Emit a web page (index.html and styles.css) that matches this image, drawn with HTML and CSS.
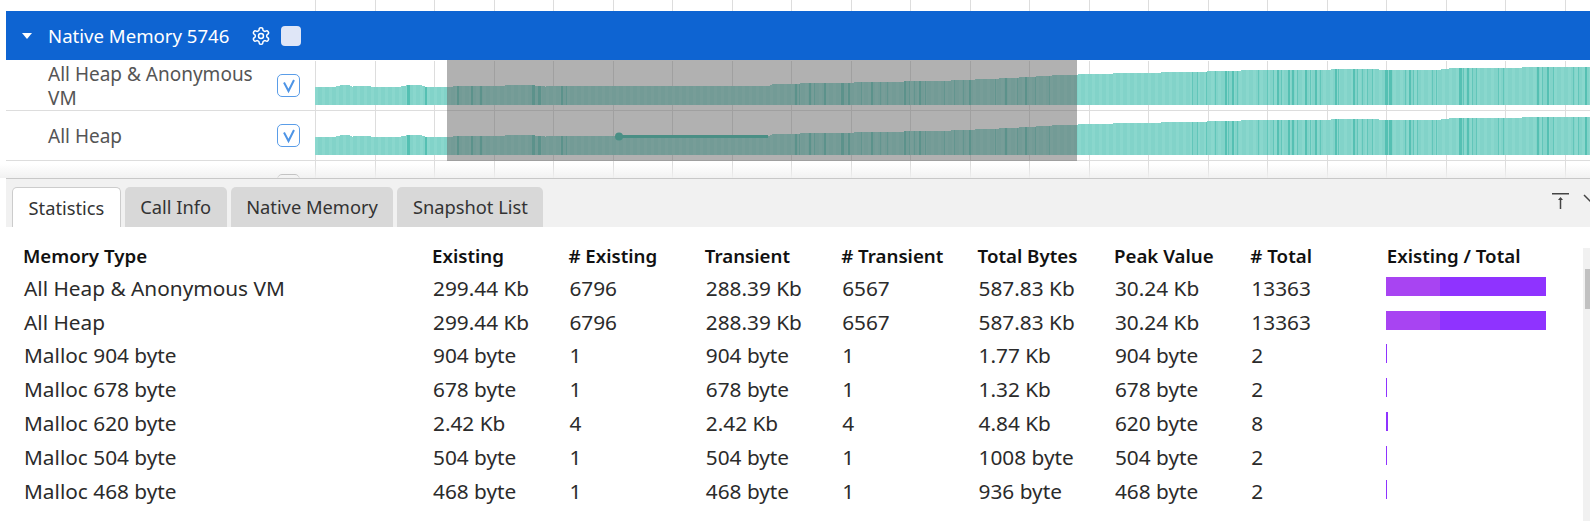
FILE: index.html
```html
<!DOCTYPE html>
<html lang="en">
<head>
  <meta charset="UTF-8">
  <title>Native Memory</title>
  <link rel="stylesheet" href="styles.css">
</head>
<body>
  <div class="trace">
    <div class="top-gap"><div class="grid-lines"></div></div>
    <div class="group-head">
      <svg class="caret" viewBox="0 0 10 6"><path d="M0 0h10L5 6z"/></svg>
      <span class="group-title">Native Memory 5746</span>
      <svg class="gear" viewBox="0 0 24 24" fill="none" stroke="#fff" stroke-width="1.8" stroke-linejoin="round"><path d="M12.22 2h-.44a2 2 0 0 0-2 2v.18a2 2 0 0 1-1 1.73l-.43.25a2 2 0 0 1-2 0l-.15-.08a2 2 0 0 0-2.73.73l-.22.38a2 2 0 0 0 .73 2.73l.15.1a2 2 0 0 1 1 1.72v.51a2 2 0 0 1-1 1.74l-.15.09a2 2 0 0 0-.73 2.73l.22.38a2 2 0 0 0 2.73.73l.15-.08a2 2 0 0 1 2 0l.43.25a2 2 0 0 1 1 1.73V20a2 2 0 0 0 2 2h.44a2 2 0 0 0 2-2v-.18a2 2 0 0 1 1-1.73l.43-.25a2 2 0 0 1 2 0l.15.08a2 2 0 0 0 2.73-.73l.22-.39a2 2 0 0 0-.73-2.73l-.15-.08a2 2 0 0 1-1-1.74v-.5a2 2 0 0 1 1-1.74l.15-.09a2 2 0 0 0 .73-2.73l-.22-.38a2 2 0 0 0-2.73-.73l-.15.08a2 2 0 0 1-2 0l-.43-.25a2 2 0 0 1-1-1.73V4a2 2 0 0 0-2-2z"/><circle cx="12" cy="12" r="3"/></svg>
      <span class="head-box"></span>
    </div>
    <div class="track">
      <div class="track-label">
        <span class="track-name">All Heap &amp; Anonymous VM</span>
        <span class="check"><svg viewBox="0 0 16 16" fill="none" stroke="#4d94e6" stroke-width="2"><path d="M3 4.5L7.5 13 13 2"/></svg></span>
      </div>
      <div class="track-chart grid-lines"><canvas id="chart-anon" width="1275" height="49"></canvas></div>
    </div>
    <div class="track">
      <div class="track-label">
        <span class="track-name">All Heap</span>
        <span class="check"><svg viewBox="0 0 16 16" fill="none" stroke="#4d94e6" stroke-width="2"><path d="M3 4.5L7.5 13 13 2"/></svg></span>
      </div>
      <div class="track-chart grid-lines"><canvas id="chart-heap" width="1275" height="49"></canvas></div>
    </div>
    <div class="track">
      <div class="track-label">
        <span class="track-name"></span>
        <span class="check check-off"></span>
      </div>
      <div class="track-chart grid-lines"></div>
    </div>
    <div class="selection"></div>
    <div class="fade"></div>
  </div>

  <div class="panel">
    <div class="tab-bar">
      <div class="tab tab-active">Statistics</div>
      <div class="tab">Call Info</div>
      <div class="tab">Native Memory</div>
      <div class="tab">Snapshot List</div>
      <svg class="pin" viewBox="0 0 17 17" fill="none" stroke="#444"><path d="M0 .75h17" stroke-width="1.5"/><path d="M8.5 16V5" stroke-width="1.5"/><path d="M6 7l2.5-3L11 7z" fill="#444" stroke="none"/></svg>
      <svg class="fold" viewBox="0 0 20 11" fill="none" stroke="#444" stroke-width="1.5"><path d="M1 1l9 9 9-9"/></svg>
    </div>
    <div class="table-wrap">
      <table class="stats">
        <thead>
          <tr><th>Memory Type</th><th>Existing</th><th># Existing</th><th>Transient</th><th># Transient</th><th>Total Bytes</th><th>Peak Value</th><th># Total</th><th>Existing / Total</th></tr>
        </thead>
        <tbody>
          <tr><td>All Heap &amp; Anonymous VM</td><td>299.44 Kb</td><td>6796</td><td>288.39 Kb</td><td>6567</td><td>587.83 Kb</td><td>30.24 Kb</td><td>13363</td><td><div class="ratio ratio-full"><span class="ratio-part"></span></div></td></tr>
          <tr><td>All Heap</td><td>299.44 Kb</td><td>6796</td><td>288.39 Kb</td><td>6567</td><td>587.83 Kb</td><td>30.24 Kb</td><td>13363</td><td><div class="ratio ratio-full"><span class="ratio-part"></span></div></td></tr>
          <tr><td>Malloc 904 byte</td><td>904 byte</td><td>1</td><td>904 byte</td><td>1</td><td>1.77 Kb</td><td>904 byte</td><td>2</td><td><div class="ratio ratio-thin"></div></td></tr>
          <tr><td>Malloc 678 byte</td><td>678 byte</td><td>1</td><td>678 byte</td><td>1</td><td>1.32 Kb</td><td>678 byte</td><td>2</td><td><div class="ratio ratio-thin"></div></td></tr>
          <tr><td>Malloc 620 byte</td><td>2.42 Kb</td><td>4</td><td>2.42 Kb</td><td>4</td><td>4.84 Kb</td><td>620 byte</td><td>8</td><td><div class="ratio ratio-wide"></div></td></tr>
          <tr><td>Malloc 504 byte</td><td>504 byte</td><td>1</td><td>504 byte</td><td>1</td><td>1008 byte</td><td>504 byte</td><td>2</td><td><div class="ratio ratio-thin"></div></td></tr>
          <tr><td>Malloc 468 byte</td><td>468 byte</td><td>1</td><td>468 byte</td><td>1</td><td>936 byte</td><td>468 byte</td><td>2</td><td><div class="ratio ratio-thin"></div></td></tr>
        </tbody>
      </table>
      <div class="scrollbar"><div class="scroll-thumb"></div></div>
    </div>
  </div>
  <script src="app.js"></script>
</body>
</html>
```

FILE: styles.css
```css
body {
  margin: 0;
  height: 528px;
  overflow: hidden;
  background: #fff;
  font-family: "Noto Sans", Arial, sans-serif;
  font-size: 18.3px;
  color: #333;
}
.grid-lines {
  background-image: repeating-linear-gradient(to right, #ddd 0, #ddd 1px, transparent 1px, transparent 59.52px);
}
.trace {
  position: relative;
  height: 178px;
  overflow: hidden;
}
.top-gap {
  height: 11px;
  padding-left: 315px;
}
.top-gap .grid-lines {
  height: 100%;
}
.group-head {
  display: flex;
  align-items: center;
  height: 49px;
  margin: 0 0 1px 6px;
  background: #0e64d2;
  color: #fff;
}
.caret {
  width: 10px;
  height: 6px;
  margin-left: 16px;
  fill: #fff;
}
.group-title {
  width: 203px;
  margin-left: 16px;
  font-size: 18.6px;
}
.gear {
  width: 20px;
  height: 20px;
}
.head-box {
  width: 20px;
  height: 20px;
  margin-left: 10px;
  border-radius: 4px;
  background: #dfe6f7;
}
.track {
  display: flex;
  height: 50px;
  margin-left: 6px;
  box-sizing: border-box;
  border-bottom: 1px solid #ddd;
}
.track-label {
  display: flex;
  align-items: center;
  width: 309px;
  flex: none;
  padding-left: 42px;
  box-sizing: border-box;
  color: #555;
  font-size: 19px;
  line-height: 24px;
}
.track-name {
  width: 229px;
  padding-right: 12px;
  box-sizing: border-box;
}
.check {
  display: flex;
  align-items: center;
  justify-content: center;
  width: 23px;
  height: 23px;
  box-sizing: border-box;
  border: 1px solid #5a9de8;
  border-radius: 5px;
}
.check svg {
  width: 16px;
  height: 16px;
}
.check-off {
  align-self: flex-start;
  margin-top: 13px;
  border-color: #666;
}
.track-chart {
  flex: 1;
  height: 49px;
  overflow: hidden;
}
.track-chart canvas {
  display: block;
}
.selection {
  position: absolute;
  left: 447px;
  top: 60px;
  width: 630px;
  height: 101px;
  background: rgba(100, 100, 100, 0.5);
}
.fade {
  position: absolute;
  left: 0;
  right: 0;
  bottom: 0;
  height: 14px;
  background: linear-gradient(to bottom, rgba(240, 240, 240, 0), rgba(240, 240, 240, 0.9));
}
.panel {
  border-top: 1px solid #c8c8c8;
  margin-left: 6px;
}
.tab-bar {
  position: relative;
  display: flex;
  gap: 4px;
  height: 40px;
  padding: 8px 0 0 6px;
  background: #f1f1f1;
}
.tab {
  height: 40px;
  padding: 0 15.5px;
  line-height: 39px;
  box-sizing: border-box;
  border-radius: 5px 5px 0 0;
  background: #d8d8d8;
}
.tab-active {
  background: #fff;
  border: 1px solid #ccc;
  border-bottom: none;
}
.pin {
  position: absolute;
  left: 1546px;
  top: 14px;
  width: 17px;
  height: 17px;
}
.fold {
  position: absolute;
  left: 1577px;
  top: 15px;
  width: 20px;
  height: 11px;
}
.table-wrap {
  position: relative;
  height: 285px;
}
.stats {
  border-collapse: collapse;
  table-layout: fixed;
  width: 1534px;
  margin: 9px 0 0 16px;
}
.stats th {
  width: 136.4px;
  height: 35px;
  padding: 3px 0 0 1px;
  box-sizing: border-box;
  text-align: left;
  font-size: 18.7px;
  font-weight: 600;
  color: #111;
}
.stats th:first-child {
  width: 409px;
}
.stats th:last-child {
  width: auto;
}
.stats td {
  height: 33.8px;
  padding: 0 0 0 2px;
  font-size: 20.8px;
  color: #2b2b2b;
}
.stats td:last-child {
  padding-left: 0;
}
.ratio {
  height: 19px;
  margin-bottom: 3px;
  background: #8f33ff;
}
.ratio-full {
  width: 160px;
}
.ratio-part {
  display: block;
  width: 54px;
  height: 100%;
  background: #a844f2;
}
.ratio-thin {
  width: 1px;
}
.ratio-wide {
  width: 2px;
}
.scrollbar {
  position: absolute;
  right: 0;
  top: 12px;
  width: 7px;
  height: 273px;
  background: #f1f1f1;
}
.scroll-thumb {
  margin: 21px 0 0 2px;
  height: 40px;
  background: #c1c1c1;
}
```

FILE: app.js
```js
// Tops of the area, as [x, y] in page coordinates for the first track
const outline = [
  [315, 87], [335, 86.5], [341, 85], [348, 85], [352, 86.5], [366, 86], [375, 87], [400, 86.5],
  [408, 85], [420, 85], [426, 87], [530, 85], [545, 86.5], [768, 86], [772, 84], [880, 82],
  [950, 80.5], [1010, 78], [1060, 75], [1130, 73], [1190, 72], [1240, 70.5], [1330, 69.5],
  [1376, 68.5], [1380, 70], [1440, 69.5], [1452, 68], [1590, 67]
];

// Darker samples, as [x, width]
const darkBars = [
  [407, 3], [425, 2], [457, 2], [471, 2], [480, 2], [532, 3], [538, 3], [561, 2], [566, 1], [795, 2],
  [799, 1], [809, 2], [814, 1], [824, 2], [841, 3], [848, 2], [861, 1], [871, 2], [880, 1], [887, 1],
  [904, 2], [909, 1], [914, 1], [919, 2], [925, 1], [944, 1], [954, 1], [963, 1], [969, 2], [995, 1],
  [1005, 2], [1017, 1], [1025, 2], [1035, 1], [1049, 1], [1192, 1], [1197, 1], [1206, 1], [1215, 1],
  [1225, 2], [1228, 1], [1232, 2], [1237, 1], [1258, 1], [1267, 1], [1273, 1], [1277, 2], [1281, 1],
  [1288, 2], [1292, 2], [1297, 1], [1305, 2], [1310, 1], [1315, 2], [1320, 1], [1335, 2], [1338, 1],
  [1353, 2], [1357, 1], [1362, 1], [1367, 1], [1372, 1], [1385, 3], [1389, 3], [1405, 1], [1409, 2],
  [1413, 1], [1417, 1], [1432, 1], [1436, 1], [1459, 3], [1463, 1], [1467, 2], [1472, 1], [1476, 1],
  [1498, 1], [1503, 1], [1537, 2], [1542, 1], [1547, 2], [1553, 1], [1573, 1], [1578, 1], [1585, 2]
];

const CHART_LEFT = 315;
const AREA_BOTTOM = 44;

function topAt(x) {
  for (let i = 1; i < outline.length; i++) {
    if (x <= outline[i][0]) {
      const a = outline[i - 1];
      const b = outline[i];
      return a[1] + (b[1] - a[1]) * (x - a[0]) / (b[0] - a[0]);
    }
  }
  return outline[outline.length - 1][1];
}

function drawChart(id) {
  const ctx = document.getElementById(id).getContext('2d');
  for (let x = CHART_LEFT; x < 1590; x++) {
    const top = Math.round(topAt(x)) - 61;
    ctx.fillStyle = x % 7 < 3 ? '#8ad7cd' : '#82d3c9';
    ctx.fillRect(x - CHART_LEFT, top, 1, AREA_BOTTOM - top);
  }
  darkBars.forEach(([x, w]) => {
    const top = Math.round(topAt(x)) - 61;
    ctx.fillStyle = w > 1 ? '#55c0b3' : '#62c6ba';
    ctx.fillRect(x - CHART_LEFT, top, w, AREA_BOTTOM - top);
  });
}

drawChart('chart-anon');
drawChart('chart-heap');

// Selected call on the second track
const heap = document.getElementById('chart-heap').getContext('2d');
heap.fillStyle = '#30baa6';
heap.fillRect(619 - CHART_LEFT, 24, 149, 3);
heap.beginPath();
heap.arc(619 - CHART_LEFT, 25.5, 4, 0, Math.PI * 2);
heap.fill();
```
